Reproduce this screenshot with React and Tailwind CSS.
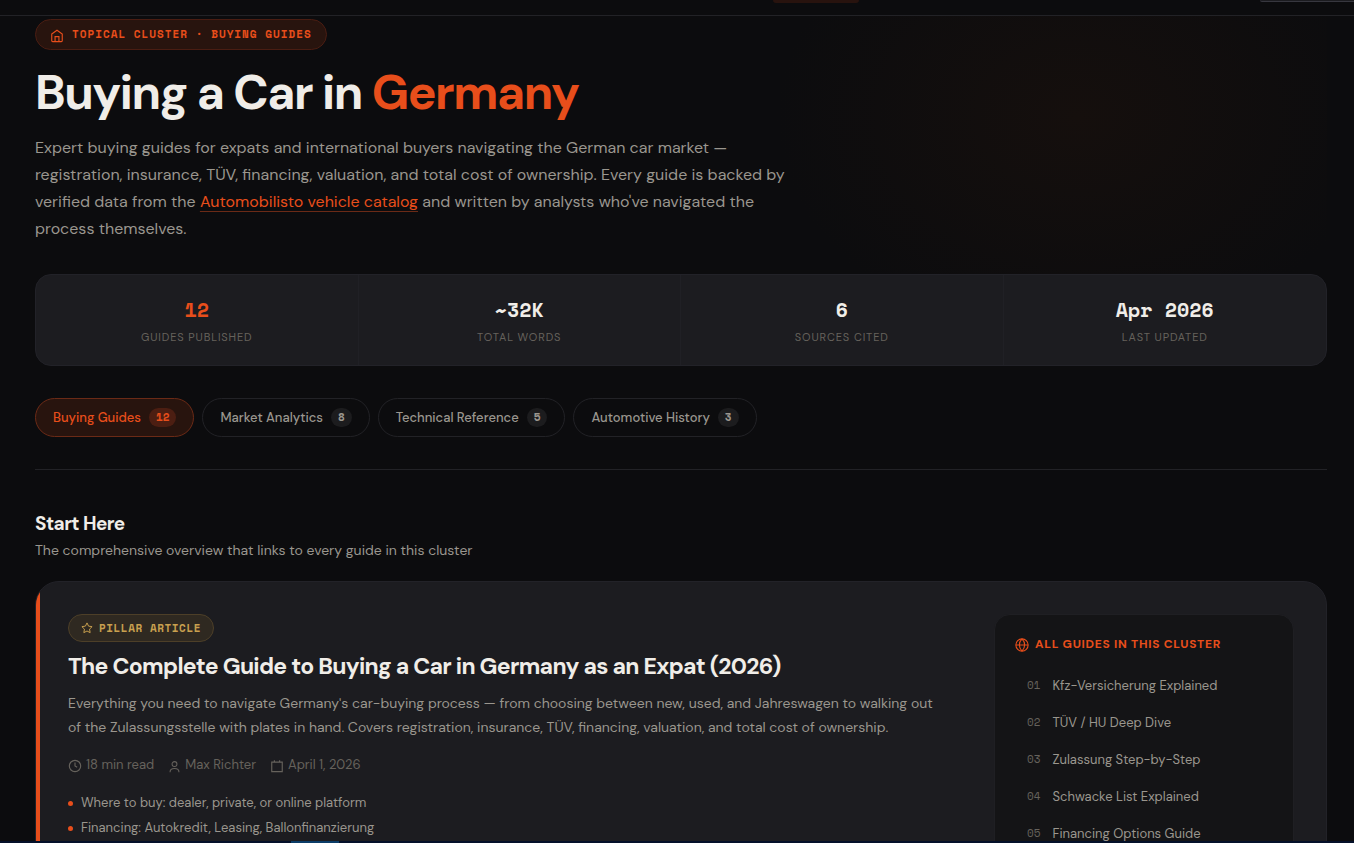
import clsx from "clsx";

const STATS = [
  { value: "12", label: "Guides Published", accent: true },
  { value: "~32K", label: "Total Words" },
  { value: "6", label: "Sources Cited" },
  { value: "Apr 2026", label: "Last Updated" },
];

const CLUSTERS = [
  { name: "Buying Guides", count: 12, active: true },
  { name: "Market Analytics", count: 8 },
  { name: "Technical Reference", count: 5 },
  { name: "Automotive History", count: 3 },
];

const TOPICS = [
  "Where to buy: dealer, private, or online platform",
  "Financing: Autokredit, Leasing, Ballonfinanzierung",
];

const GUIDES = [
  "Kfz-Versicherung Explained",
  "TÜV / HU Deep Dive",
  "Zulassung Step-by-Step",
  "Schwacke List Explained",
  "Financing Options Guide",
];

const MONO = "font-['Space_Mono','Liberation_Mono',monospace]";

function Icon({ size = 14, className, children }) {
  return (
    <svg
      width={size}
      height={size}
      viewBox="0 0 16 16"
      fill="none"
      stroke="currentColor"
      strokeWidth="1.3"
      aria-hidden="true"
      className={clsx("shrink-0", className)}
    >
      {children}
    </svg>
  );
}

function HomeIcon() {
  return (
    <Icon className="mt-0.5">
      <path d="M2 5.8L8 1.5l6 4.3v7.7a1 1 0 0 1-1 1H3a1 1 0 0 1-1-1zM5.8 14.5V8.7h4.4v5.8" />
    </Icon>
  );
}

function StarIcon() {
  return (
    <Icon size={12}>
      <path d="M8 1.2l2.1 4.3 4.7.7-3.4 3.3.8 4.7L8 12l-4.2 2.2.8-4.7L1.2 6.2l4.7-.7z" />
    </Icon>
  );
}

function ClockIcon() {
  return (
    <Icon className="mt-0.5">
      <circle cx="8" cy="8" r="6.5" />
      <path d="M8 4v4l2.5 1.5" />
    </Icon>
  );
}

function UserIcon() {
  return (
    <Icon size={13} className="mt-0.5">
      <circle cx="8" cy="5" r="3" />
      <path d="M2.5 15c0-3 1.8-4.5 5.5-4.5s5.5 1.5 5.5 4.5" />
    </Icon>
  );
}

function CalendarIcon() {
  return (
    <Icon className="mt-0.5">
      <path d="M2 3.5h12v11H2zM5 1.5v2M11 1.5v2" />
    </Icon>
  );
}

function GlobeIcon() {
  return (
    <Icon className="mt-0.5">
      <circle cx="8" cy="8" r="7" />
      <path d="M1 8h14M8 1c-4 4-4 10 0 14M8 1c4 4 4 10 0 14" />
    </Icon>
  );
}

function Header() {
  return (
    <header className="h-4 shrink-0 flex justify-end items-start gap-[401px] border-b border-[#222226]">
      <div className="w-[86px] h-[3px] rounded-b-md bg-[#28130e]" />
      <div className="w-[94px] h-0.5 rounded-bl-md border-b border-[#37373f] bg-[#1c1c20]" />
    </header>
  );
}

function Stats() {
  return (
    <dl className="mt-8 grid grid-cols-4 rounded-2xl border border-[#222228] bg-[#1c1c20] divide-x divide-[#202025]">
      {STATS.map((s) => (
        <div key={s.label} className="flex flex-col-reverse items-center gap-1 pt-[21px] pb-[19px]">
          <dt className="text-[11px] leading-[18px] tracking-[0.08em] uppercase text-[#66625c]">{s.label}</dt>
          <dd className={clsx("text-xl leading-7 font-bold", MONO, s.accent ? "text-[#e84e1b]" : "text-[#f0ede8]")}>
            {s.value}
          </dd>
        </div>
      ))}
    </dl>
  );
}

function ClusterTabs() {
  return (
    <nav className="mt-8 flex flex-wrap gap-2">
      {CLUSTERS.map((c) => (
        <a
          key={c.name}
          href="#"
          className={clsx(
            "h-[39px] px-[17px] flex items-center gap-2 rounded-full border text-[13px] font-medium",
            c.active ? "bg-[#28140e] border-[#6b2a16] text-[#e84e1b]" : "border-[#222226] text-[#9a968e]"
          )}
        >
          {c.name}
          <span
            className={clsx(
              "px-[7px] h-[19px] flex items-center rounded-full text-[11px] font-bold",
              MONO,
              c.active ? "bg-[#4c1e12]" : "bg-[#1c1c1e]"
            )}
          >
            {c.count}
          </span>
        </a>
      ))}
    </nav>
  );
}

function PillarCard() {
  return (
    <article className="mt-[19px] flex rounded-3xl border border-[#222228] bg-[#1c1c20] overflow-hidden">
      <div className="w-1 shrink-0 bg-[#e84e1b]" />
      <div className="flex-1 min-w-0 flex gap-8 pl-7 pr-8 py-8">
        <div className="flex-1 min-w-0">
          <span className={clsx("h-7 px-3 inline-flex items-center gap-1.5 rounded-full border border-[#4d3f28] bg-[#2f2921] text-[11px] font-bold tracking-wider uppercase text-[#c9a04f]", MONO)}>
            <StarIcon />
            Pillar Article
          </span>
          <h3 className="mt-2 text-[23px] leading-8 font-bold tracking-[-0.03em] text-[#f0ede8]">
            The Complete Guide to Buying a Car in Germany as an Expat (2026)
          </h3>
          <p className="mt-[9px] max-w-[870px] text-sm leading-6 text-[#9a968e]">
            Everything you need to navigate Germany's car-buying process — from choosing between new, used, and
            Jahreswagen to walking out of the Zulassungsstelle with plates in hand. Covers registration, insurance,
            TÜV, financing, valuation, and total cost of ownership.
          </p>
          <div className="mt-4 flex gap-3.5 text-[13px] leading-5 text-[#66625c]">
            <span className="flex items-center gap-1"><ClockIcon />18 min read</span>
            <span className="flex items-center gap-1"><UserIcon />Max Richter</span>
            <span className="flex items-center gap-1"><CalendarIcon />April 1, 2026</span>
          </div>
          <ul className="mt-[18px] flex flex-col gap-[5px] text-[13px] leading-5 text-[#9a968e]">
            {TOPICS.map((t) => (
              <li key={t} className="flex items-center gap-2">
                <span className="size-[5px] rounded-full bg-[#e84e1b]" />
                {t}
              </li>
            ))}
          </ul>
        </div>

        <aside className="w-[300px] shrink-0 px-5 pt-[19px] pb-6 rounded-2xl border border-[#1f1f23] bg-[#141416]">
          <h4 className="flex items-center gap-1.5 text-xs leading-5 font-bold tracking-[0.06em] uppercase text-[#e84e1b]">
            <GlobeIcon />
            All Guides in This Cluster
          </h4>
          <ol className="mt-[13px]">
            {GUIDES.map((g, i) => (
              <li key={g}>
                <a href="#" className="h-[37px] px-3 flex items-center gap-3 text-[13px] text-[#9a968e]">
                  <span className={clsx("text-[11px] text-[#66625c]", MONO)}>{String(i + 1).padStart(2, "0")}</span>
                  {g}
                </a>
              </li>
            ))}
          </ol>
        </aside>
      </div>
    </article>
  );
}

export default function App() {
  return (
    <div className="h-screen flex flex-col overflow-hidden bg-[#0c0c0e] font-['DM_Sans',Inter,sans-serif]">
      <Header />
      <main className="relative flex-1 min-h-0 overflow-hidden pl-[35px] pr-[27px] pt-[3px]">
        <div className="absolute top-0 right-[27px] w-[550px] h-[400px] pointer-events-none bg-[radial-gradient(300px_225px_at_300px_101px,#150f0d,#0c0c0e)]" />
        <div className="relative">
          <span className={clsx("h-[31px] px-3.5 inline-flex items-center gap-2 rounded-full border border-[#4a1d12] bg-[#28140e] text-[11px] font-bold tracking-[1px] uppercase text-[#e84e1b]", MONO)}>
            <HomeIcon />
            Topical Cluster · Buying Guides
          </span>
          <h1 className="mt-4 text-5xl leading-[53px] font-bold tracking-[-0.03em] text-[#f0ede8]">
            Buying a Car in <span className="text-[#e84e1b]">Germany</span>
          </h1>
          <p className="mt-[15px] max-w-[760px] text-base leading-[27px] text-[#9a968e]">
            Expert buying guides for expats and international buyers navigating the German car market —
            registration, insurance, TÜV, financing, valuation, and total cost of ownership. Every guide is backed by
            verified data from the{" "}
            <a href="#" className="text-[#e84e1b] underline decoration-[#6b2a16] decoration-1 underline-offset-4">Automobilisto vehicle catalog</a>{" "}
            and written by analysts who've navigated the process themselves.
          </p>
          <Stats />
          <ClusterTabs />
          <hr className="mt-8 border-[#222226]" />

          <section className="mt-10">
            <h2 className="text-[19px] leading-7 font-bold tracking-[-0.03em] text-[#f0ede8]">Start Here</h2>
            <p className="text-sm leading-6 text-[#9a968e]">
              The comprehensive overview that links to every guide in this cluster
            </p>
            <PillarCard />
          </section>
        </div>
      </main>
      <div className="h-0.5 shrink-0 bg-[#04102a]">
        <div className="ml-[291px] w-12 h-full bg-[#0b3c68]" />
      </div>
    </div>
  );
}
